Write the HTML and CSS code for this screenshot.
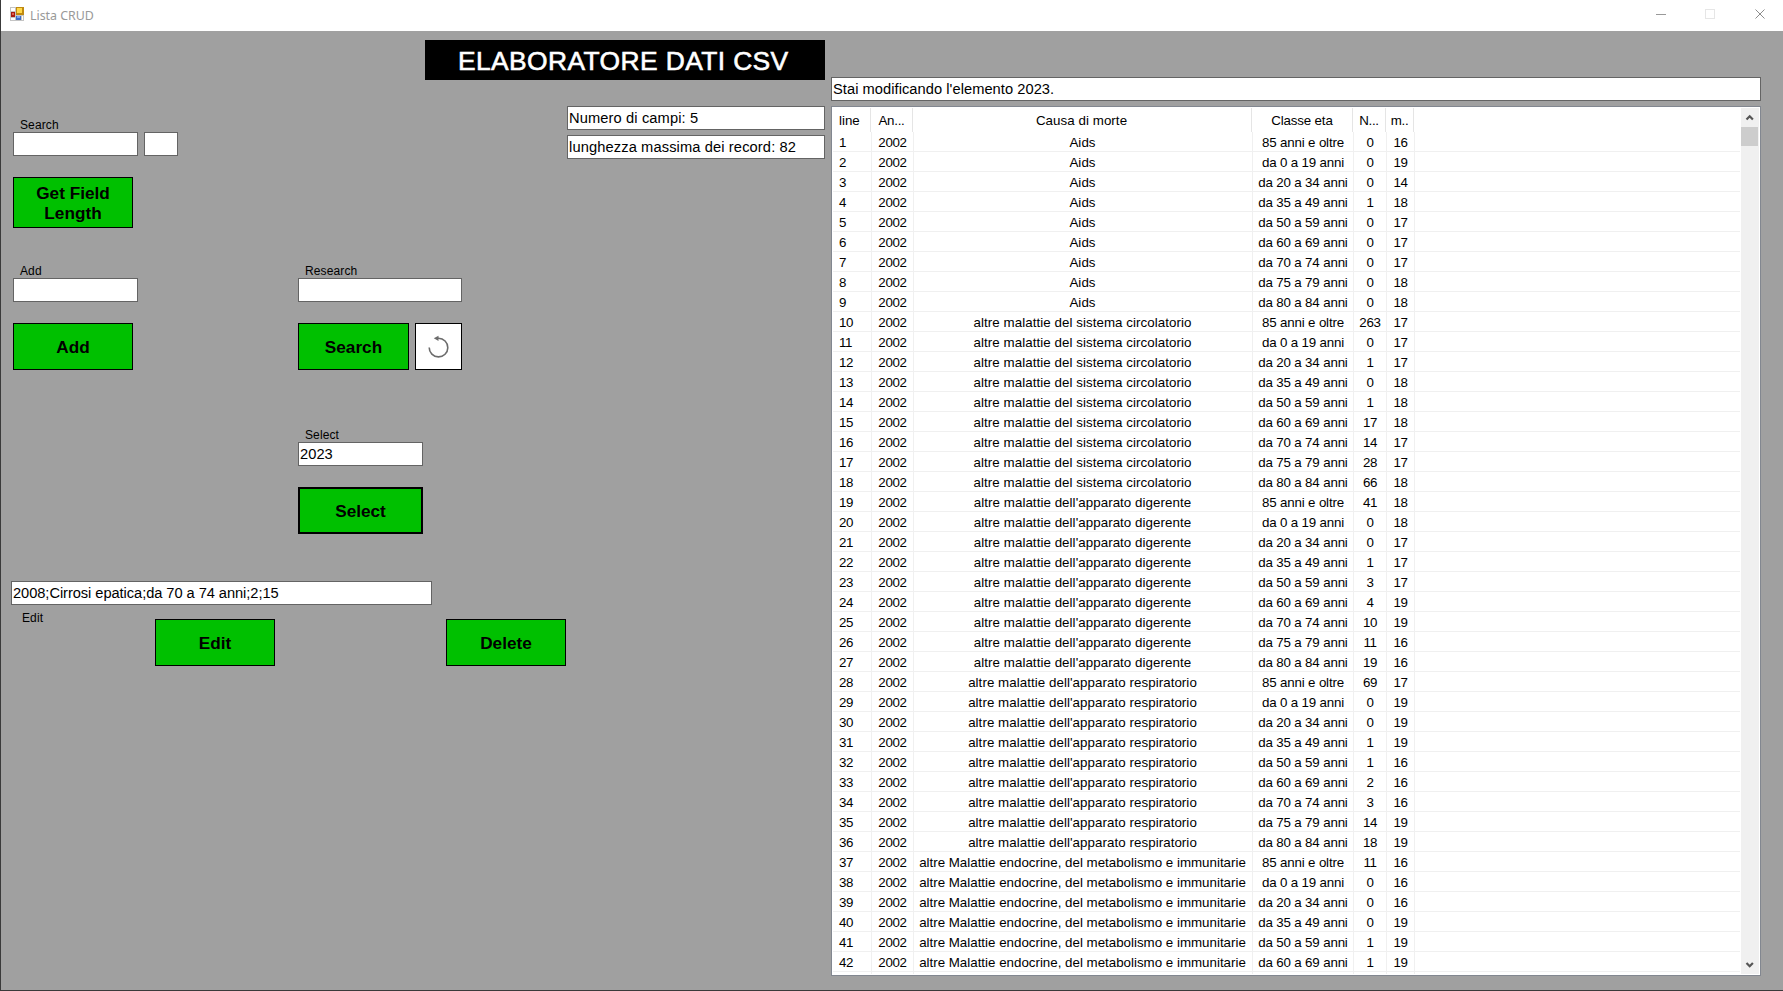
FILE: index.html
```html
<!DOCTYPE html>
<html lang="it">
<head>
<meta charset="utf-8">
<title>Lista CRUD</title>
<link rel="stylesheet" href="styles.css">
</head>
<body>
<div class="window">
  <header class="titlebar">
    <svg class="app-icon" width="14" height="14" viewBox="0 0 14 14" shape-rendering="crispEdges">
      <rect width="14" height="14" fill="#c4c4c4"/>
      <path d="M1 1h4v3H1zM1 11h4v2H1zM12 9h1v4h-1z" fill="#fff"/>
      <rect x="1" y="5" width="4" height="5" fill="#a81c10"/><rect x="2" y="6" width="2" height="2" fill="#e06050"/>
      <rect x="6" y="0" width="8" height="8" fill="#c08a10"/><rect x="7" y="1" width="5" height="5" fill="#ffd84a"/>
      <rect x="6" y="9" width="5" height="4" fill="#3c6cc8"/><rect x="7" y="9" width="3" height="2" fill="#7ea6ee"/>
    </svg>
    <span class="titlebar-text">Lista CRUD</span>
    <svg class="controls" width="110" height="10" viewBox="0 0 110 10" fill="none">
      <path d="M0 5.5h10" stroke="#999"/>
      <rect x="49.5" y=".5" width="9" height="9" stroke="#e6e6e6"/>
      <path d="M99.5 .5l9 9M108.5 .5l-9 9" stroke="#8c8c8c"/>
    </svg>
  </header>
  <main class="form">
    <section class="left">
      <h1 class="banner"><span>ELABORATORE DATI CSV</span></h1>
      <div class="top-row">
        <div class="group search-group">
          <span class="label">Search</span>
          <div class="inline"><div class="box w125"></div><div class="box w34"></div></div>
          <button class="btn tall">Get Field<br>Length</button>
        </div>
        <div class="info">
          <div class="box"><span>Numero di campi: 5</span></div>
          <div class="box"><span>lunghezza massima dei record: 82</span></div>
        </div>
      </div>
      <div class="mid-row">
        <div class="group add-group">
          <span class="label">Add</span>
          <div class="box w125"></div>
          <button class="btn">Add</button>
        </div>
        <div class="group research-group">
          <span class="label">Research</span>
          <div class="box"></div>
          <div class="inline">
            <button class="btn w111">Search</button>
            <button class="btn refresh" aria-label="Reset">
              <svg width="45" height="45" viewBox="0 0 45 45">
                <path d="M13.200 23.500A9.300 9.300 0 1 0 22.500 14.300h-2" fill="none" stroke="#6c6c6c" stroke-width="1.600"/>
                <path d="M17.800 14.300l4.700-2.600v5.200z" fill="#6c6c6c"/>
              </svg>
            </button>
          </div>
        </div>
      </div>
      <div class="group select-group">
        <span class="label">Select</span>
        <div class="box"><span>2023</span></div>
        <button class="btn focused">Select</button>
      </div>
      <div class="edit-group">
        <div class="box"><span>2008;Cirrosi epatica;da 70 a 74 anni;2;15</span></div>
        <div class="edit-actions">
          <span class="label">Edit</span>
          <button class="btn">Edit</button>
          <button class="btn">Delete</button>
        </div>
      </div>
    </section>
    <section class="right">
      <div class="box status"><span>Stai modificando l'elemento 2023.</span></div>
      <div class="list">
        <div class="table">
          <div class="row head">
            <span>line</span><span>An...</span><span>Causa di morte</span><span>Classe eta</span><span>N...</span><span>m..</span>
          </div>
          <div class="rows" id="rows"></div>
        </div>
        <div class="scrollbar">
          <svg width="18" height="19" viewBox="0 0 18 19"><path d="M5.500 11.500L8.700 8.300l3.200 3.200" fill="none" stroke="#555" stroke-width="2.200"/></svg>
          <div class="thumb"></div>
          <svg width="18" height="19" viewBox="0 0 18 19"><path d="M5.500 8L8.700 11.200 11.900 8" fill="none" stroke="#555" stroke-width="2.200"/></svg>
        </div>
      </div>
    </section>
  </main>
</div>
<script src="app.js"></script>
</body>
</html>
```
FILE: styles.css
```css
* { box-sizing: border-box; }
body { margin: 0; font-family: "Liberation Sans", Arial, sans-serif; color: #000; }
.window { width: 1783px; height: 991px; overflow: hidden; background: #a0a0a0; border-left: 1px solid #3a3a3a; border-bottom: 1px solid #3a3a3a; }
.titlebar { height: 31px; background: #fff; display: flex; align-items: flex-start; padding: 7px 17px 0 9px; }
.titlebar-text { flex: 1; margin-left: 6px; font: 12.4px/17px "Noto Sans", sans-serif; color: #999; }
.controls { margin-top: 2px; }
.form { display: flex; gap: 6px; }
.left { width: 824px; padding-top: 9px; }
.banner { margin: 0 0 0 auto; width: 400px; height: 40px; background: #000; color: #fff; font-size: 26.4px; font-weight: 400; line-height: 42px; padding-left: 33px; letter-spacing: .4px; -webkit-text-stroke: .6px #fff; }
.box { height: 24px; background: #fff; border: 1px solid #646464; padding-left: 1px; font-size: 14.67px; line-height: 22px; letter-spacing: .05px; white-space: nowrap; }
.info .box { letter-spacing: .12px; }
.label { font-size: 12px; line-height: 15px; height: 14px; letter-spacing: .12px; padding-left: 7px; }
.group { display: flex; flex-direction: column; align-items: flex-start; }
.inline { display: flex; gap: 6px; }
.btn { width: 120px; height: 47px; margin: 0; padding: 0; border: 1px solid #000; background: #00c000; font: bold 17.2px/20px "Liberation Sans", Arial, sans-serif; color: #000; }
.tall { height: 51px; margin-top: 21px; }
.w125 { width: 125px; }
.w34 { width: 34px; }
.w111 { width: 111px; }
.refresh { width: 47px; background: #fff; }
.refresh svg { display: block; }
.top-row { display: flex; justify-content: space-between; height: 184px; }
.search-group { padding: 38px 0 0 12px; }
.info { display: flex; flex-direction: column; gap: 5px; width: 258px; padding-top: 26px; }
.mid-row { display: flex; gap: 160px; padding-left: 12px; }
.mid-row .btn { margin-top: 21px; }
.add-group { width: 125px; }
.research-group { width: 164px; }
.research-group > .box { width: 164px; }
.select-group { width: 125px; margin: 58px 0 0 297px; }
.select-group .box { width: 125px; }
.focused { width: 125px; margin-top: 21px; border-width: 2px; }
.edit-group { margin: 47px 0 0 10px; width: 555px; }
.edit-group .box { width: 421px; letter-spacing: -.06px; }
.edit-actions { display: flex; padding-top: 14px; }
.edit-actions .label { width: 144px; padding-left: 11px; margin-top: -8px; }
.edit-actions .btn + .btn { margin-left: 171px; }
.right { width: 930px; padding-top: 46px; }
.list { display: flex; margin-top: 5px; height: 870px; border: 1px solid #828790; background: #fff; padding: 1px; font-size: 13.33px; }
.table { width: 908px; height: 866px; overflow: hidden; margin-right: 1px; }
.row { display: grid; grid-template-columns: 39px 42px 339px 101px 33px 28px 1fr; height: 20px; line-height: 22px; border-bottom: 1px solid #f0f0f0; text-align: center; white-space: nowrap; }
.row span { border-right: 1px solid #f0f0f0; height: 20px; letter-spacing: -.3px; }
.row span:nth-child(3) { letter-spacing: .06px; padding-right: 1px; }
.row.wide span:nth-child(3) { letter-spacing: 0; }
.row span:nth-child(4) { letter-spacing: -.17px; }
.row span:first-child { text-align: left; padding-left: 6px; }
.head { height: 24px; line-height: 25px; border-bottom: 0; grid-template-columns: 38px 42px 339px 101px 33px 28px 1fr; }
.head span { height: 24px; border-color: #e5e5e5; }
.head span:first-child { letter-spacing: 0; }
.scrollbar { width: 18px; height: 866px; background: #f0f0f0; display: flex; flex-direction: column; }
.scrollbar svg { display: block; flex: none; }
.thumb { width: 17px; height: 19px; background: #cdcdcd; margin-bottom: auto; }
```
FILE: app.js
```js
const ages = ['85 anni e oltre', 'da 0 a 19 anni', 'da 20 a 34 anni', 'da 35 a 49 anni', 'da 50 a 59 anni',
  'da 60 a 69 anni', 'da 70 a 74 anni', 'da 75 a 79 anni', 'da 80 a 84 anni'];
const causes = ['Aids', 'altre malattie del sistema circolatorio', "altre malattie dell'apparato digerente",
  "altre malattie dell'apparato respiratorio", 'altre Malattie endocrine, del metabolismo e immunitarie'];
const counts = [0, 0, 0, 1, 0, 0, 0, 0, 0, 263, 0, 1, 0, 1, 17, 14, 28, 66, 41, 0, 0, 1, 3, 4, 10, 11, 19,
  69, 0, 0, 1, 1, 2, 3, 14, 18, 11, 0, 0, 0, 1, 1];
const marks = [16, 19, 14, 18, 17, 17, 17, 18, 18, 17, 17, 17, 18, 18, 18, 17, 17, 18, 18, 18, 17, 17, 17, 19, 19, 16, 16,
  17, 19, 19, 19, 16, 16, 16, 19, 19, 16, 16, 16, 19, 19, 19];

const rows = document.getElementById('rows');
function addRow(cells) {
  const row = document.createElement('div');
  row.className = cells[2].length > 45 ? 'row wide' : 'row';
  for (const value of cells) {
    const cell = document.createElement('span');
    cell.textContent = value;
    row.append(cell);
  }
  rows.append(row);
}
counts.forEach((count, i) => addRow([i + 1, 2002, causes[Math.floor(i / 9)], ages[i % 9], count, marks[i]]));
addRow(['', '', '', '', '', '']);
```
